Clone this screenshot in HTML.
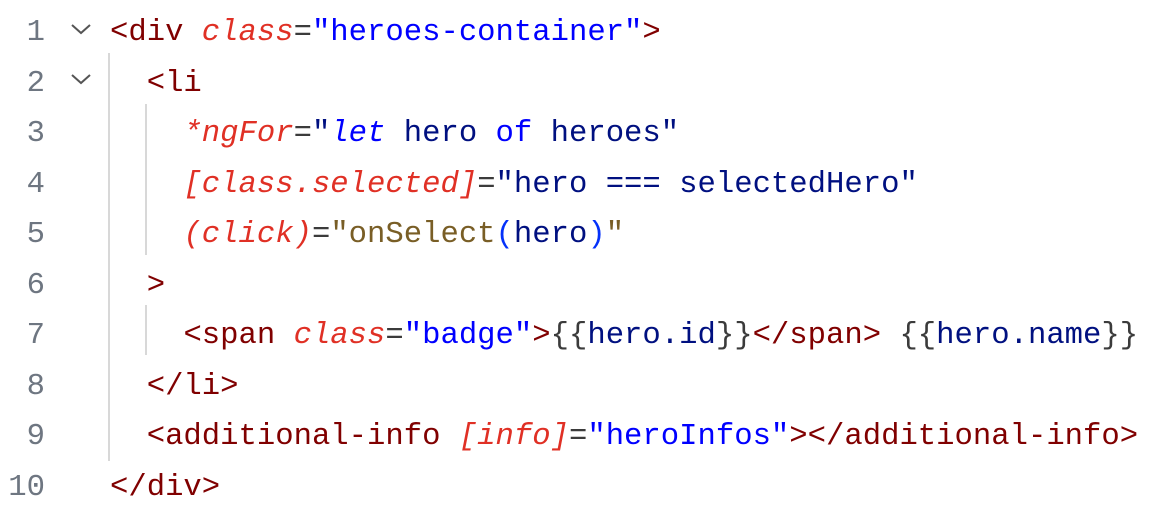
<!DOCTYPE html>
<html><head><meta charset="utf-8"><style>
body{margin:0;background:#fff;width:1172px;height:508px;overflow:hidden;position:relative;font-family:"Liberation Mono","DejaVu Sans Mono",monospace;font-size:30.6px}
.w{position:absolute;left:0;top:3px;width:1172px;height:508px}
.ln{position:absolute;left:0;width:45px;text-align:right;color:#6e7681;height:50.5px;line-height:50.5px}
.l{position:absolute;left:110px;white-space:pre;height:50.5px;line-height:50.5px}
.t{color:#800000}.a{color:#e03025;font-style:italic}.e{color:#3b3b3b}.s{color:#0000ff}.v{color:#001080}.f{color:#795e26}.p{color:#0431fa}.b{color:#3b3b3b}
.g{position:absolute;width:2px;background:#d8d8d8}
.ch{position:absolute;left:70px}
</style></head><body>
<div class="g" style="left:108px;top:53px;height:408px"></div>
<div class="g" style="left:145px;top:104px;height:151px"></div>
<div class="g" style="left:145px;top:305px;height:50px"></div>
<svg class="ch" style="top:22px" width="22" height="14"><path d="M2 3 L11 11 L20 3" fill="none" stroke="#555" stroke-width="2"/></svg>
<svg class="ch" style="top:72px" width="22" height="14"><path d="M2 3 L11 11 L20 3" fill="none" stroke="#555" stroke-width="2"/></svg>
<div class="w">
<div class="ln" style="top:5px">1</div>
<div class="ln" style="top:55.5px">2</div>
<div class="ln" style="top:106px">3</div>
<div class="ln" style="top:156.5px">4</div>
<div class="ln" style="top:207px">5</div>
<div class="ln" style="top:257.5px">6</div>
<div class="ln" style="top:308px">7</div>
<div class="ln" style="top:358.5px">8</div>
<div class="ln" style="top:409px">9</div>
<div class="ln" style="top:459.5px">10</div>
<div class="l" style="top:5px"><span class="t">&lt;div</span> <span class="a">class</span><span class="e">=</span><span class="s">"heroes-container"</span><span class="t">&gt;</span></div>
<div class="l" style="top:55.5px">  <span class="t">&lt;li</span></div>
<div class="l" style="top:106px">    <span class="a">*ngFor</span><span class="e">=</span><span class="v">"</span><span class="s" style="font-style:italic">let</span> <span class="v">hero</span> <span class="s">of</span> <span class="v">heroes</span><span class="v">"</span></div>
<div class="l" style="top:156.5px">    <span class="a">[class.selected]</span><span class="e">=</span><span class="v">"</span><span class="v">hero === selectedHero</span><span class="v">"</span></div>
<div class="l" style="top:207px">    <span class="a">(click)</span><span class="e">=</span><span class="f">"onSelect</span><span class="p">(</span><span class="v">hero</span><span class="p">)</span><span class="f">"</span></div>
<div class="l" style="top:257.5px">  <span class="t">&gt;</span></div>
<div class="l" style="top:308px">    <span class="t">&lt;span</span> <span class="a">class</span><span class="e">=</span><span class="s">"badge"</span><span class="t">&gt;</span><span class="b">{{</span><span class="v">hero.id</span><span class="b">}}</span><span class="t">&lt;/span&gt;</span> <span class="b">{{</span><span class="v">hero.name</span><span class="b">}}</span></div>
<div class="l" style="top:358.5px">  <span class="t">&lt;/li&gt;</span></div>
<div class="l" style="top:409px">  <span class="t">&lt;additional-info</span> <span class="a">[info]</span><span class="e">=</span><span class="s">"heroInfos"</span><span class="t">&gt;&lt;/additional-info&gt;</span></div>
<div class="l" style="top:459.5px"><span class="t">&lt;/div&gt;</span></div>
</div>
</body></html>
